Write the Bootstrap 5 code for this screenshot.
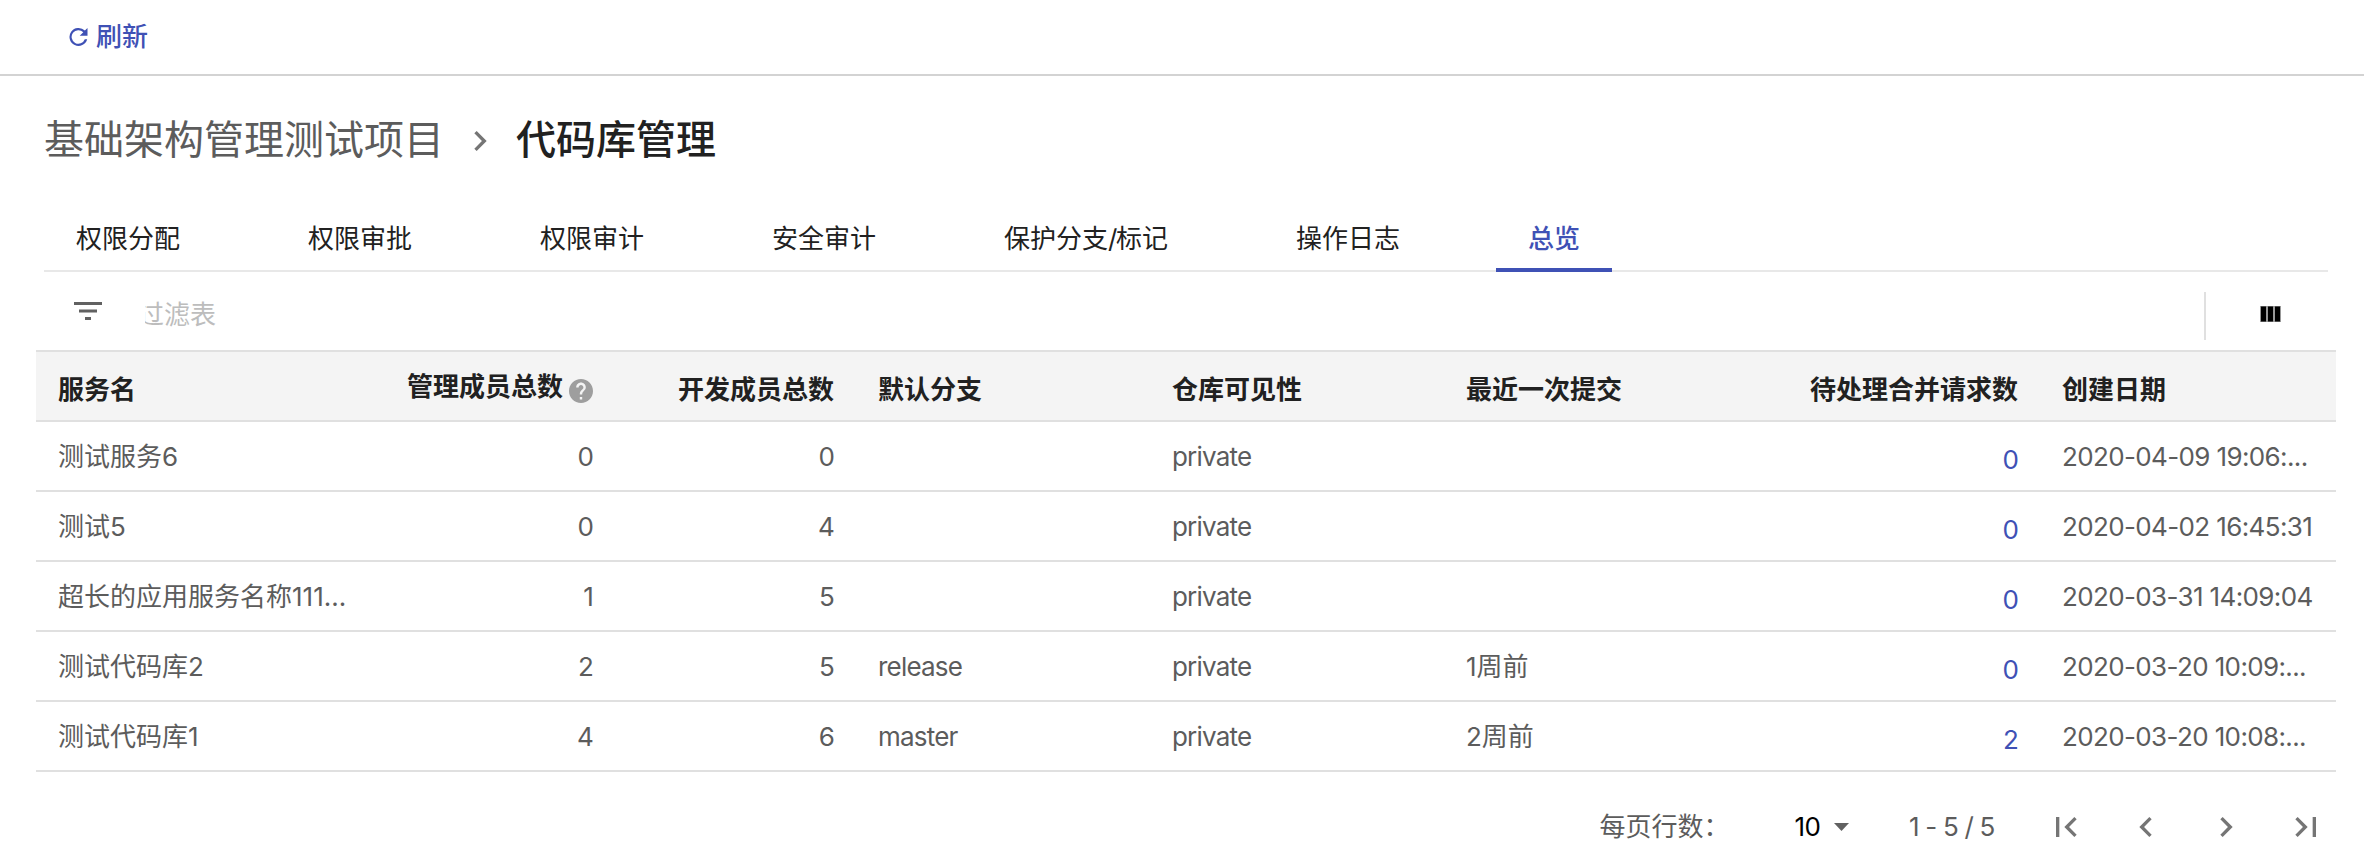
<!DOCTYPE html>
<html lang="zh-CN">
<head>
<meta charset="utf-8">
<title>代码库管理</title>
<link href="https://cdn.jsdelivr.net/npm/bootstrap@5.3.0/dist/css/bootstrap.min.css" rel="stylesheet">
<script src="https://cdn.jsdelivr.net/npm/bootstrap@5.3.0/dist/js/bootstrap.bundle.min.js" defer></script>
<style>
:root{--line:#e0e0e0;--brand:#3f51b5;--muted:#5c5c5c;--ink:#212121}
body{font-family:Inter,"Noto Sans CJK SC",sans-serif;font-size:26px;line-height:36px;color:var(--muted);background:#fff;overflow:hidden}
svg{display:block;flex:none}
.toolbar{height:76px;border-bottom:2px solid #d3d3d3;padding-left:66px}
.refresh{color:var(--brand);font-weight:500;gap:5px}
.crumbs{font-size:40px;line-height:56px;padding:36px 0 0 44px;height:136px}
.crumbs svg{margin:9px 16px 0}
.crumbs .here{color:var(--ink);font-weight:500}
.tabs{margin:0 36px 0 44px;height:60px;border-bottom:2px solid #e8e8e8;gap:64px}
.tabs .nav-link{padding:9px 32px 0;height:60px;color:var(--ink);border-bottom:4px solid transparent}
.tabs .nav-link.active{color:var(--brand);font-weight:500;border-color:var(--brand)}
.slash{letter-spacing:-1.5px}
.filter{margin:0 28px 0 36px;height:78px}
.filter-icon{margin:30px 0 0 38px}
.filter-text{margin:25px 0 0 43px;width:300px;color:#bdbdbd;overflow:hidden;text-indent:-7px}
.rule{width:2px;height:48px;margin-top:20px;background:var(--line)}
.columns-icon{margin:34px 55px 0 54px}
.grid{width:2300px;margin-left:36px;table-layout:fixed;border-collapse:separate;border-spacing:0}
.grid th,.grid td{height:70px;padding:2px 22px 0;border-bottom:2px solid var(--line);vertical-align:middle;white-space:nowrap}
.grid th{height:72px;padding-top:8px;border-top:2px solid var(--line);background:#f4f4f4;color:var(--ink);font-weight:600}
.grid td.text-end,.latin{letter-spacing:-.8px}
.stamp{letter-spacing:-.63px}
.grid a{position:relative;top:3px;color:var(--brand);text-decoration:none}
.with-help{gap:6px;margin-top:-6px}
.with-help svg{margin-top:7px}
.pager{height:88px;padding:21px 34px 0 0}
.size{margin-left:65px;gap:14px;color:#000}
.range{margin-left:60px;width:98px}
.pager button{width:48px;height:48px;padding:4px;border:0;background:none;color:#757575}
.pages{margin-left:35px;gap:32px}
</style>
</head>
<body>
<header class="toolbar d-flex align-items-center">
  <a class="refresh d-flex align-items-center text-decoration-none" href="#">
    <svg width="25" height="24" viewBox="0 0 24 24" fill="currentColor"><path d="M18.400 5.600A9 9 0 1 0 20.700 14.300h-2.400A6.800 6.800 0 1 1 16.800 7.200L13.200 10.800H21V3z"/></svg>
    <span>刷新</span>
  </a>
</header>
<nav class="crumbs d-flex align-items-start">
  <span>基础架构管理测试项目</span>
  <svg width="40" height="40" viewBox="0 0 24 24" fill="#757575"><path d="M10 6L8.590 7.410 13.170 12l-4.580 4.590L10 18l6-6z"/></svg>
  <span class="here">代码库管理</span>
</nav>
<ul class="nav tabs flex-nowrap">
  <li><a class="nav-link" href="#">权限分配</a></li>
  <li><a class="nav-link" href="#">权限审批</a></li>
  <li><a class="nav-link" href="#">权限审计</a></li>
  <li><a class="nav-link" href="#">安全审计</a></li>
  <li><a class="nav-link" href="#">保护分支<span class="slash">/</span>标记</a></li>
  <li><a class="nav-link" href="#">操作日志</a></li>
  <li><a class="nav-link active" href="#">总览</a></li>
</ul>
<div class="filter d-flex align-items-start">
  <svg class="filter-icon" width="28" height="18" fill="#616161"><path d="M0 0h28v3H0zM5 7.500h18v3H5zM11 15h6v3h-6z"/></svg>
  <div class="filter-text">过滤表</div>
  <div class="rule ms-auto"></div>
  <svg class="columns-icon" width="21" height="16"><path fill="#999" d="M0 0h21v16H0z"/><path d="M1 .5h5v15H1zM8 .5h5v15H8zM15 .5h5v15h-5z"/></svg>
</div>
<table class="grid">
  <colgroup><col width="334"><col width="245"><col width="241"><col width="294"><col width="294"><col width="294"><col width="302"><col width="296"></colgroup>
  <thead>
    <tr>
      <th>服务名</th>
      <th><div class="with-help d-flex align-items-center justify-content-end"><span>管理成员总数</span>
        <svg width="24" height="24" viewBox="2 2 20 20" fill="#9e9e9e"><path d="M12 2C6.480 2 2 6.480 2 12s4.480 10 10 10 10-4.480 10-10S17.520 2 12 2zm1 17h-2v-2h2v2zm2.070-7.750l-.9.920C13.450 12.900 13 13.500 13 15h-2v-.5c0-1.100.450-2.100 1.170-2.830l1.240-1.260c.370-.360.590-.860.590-1.410 0-1.100-.9-2-2-2s-2 .9-2 2H8c0-2.210 1.790-4 4-4s4 1.790 4 4c0 .880-.360 1.680-.930 2.250z"/></svg></div></th>
      <th class="text-end">开发成员总数</th><th>默认分支</th><th>仓库可见性</th><th>最近一次提交</th><th class="text-end">待处理合并请求数</th><th>创建日期</th>
    </tr>
  </thead>
  <tbody>
    <tr><td>测试服务6</td><td class="text-end">0</td><td class="text-end">0</td><td></td><td class="latin">private</td><td></td><td class="text-end"><a href="#">0</a></td><td class="stamp">2020-04-09 19:06:...</td></tr>
    <tr><td>测试5</td><td class="text-end">0</td><td class="text-end">4</td><td></td><td class="latin">private</td><td></td><td class="text-end"><a href="#">0</a></td><td class="stamp">2020-04-02 16:45:31</td></tr>
    <tr><td>超长的应用服务名称111...</td><td class="text-end">1</td><td class="text-end">5</td><td></td><td class="latin">private</td><td></td><td class="text-end"><a href="#">0</a></td><td class="stamp">2020-03-31 14:09:04</td></tr>
    <tr><td>测试代码库2</td><td class="text-end">2</td><td class="text-end">5</td><td class="latin">release</td><td class="latin">private</td><td>1周前</td><td class="text-end"><a href="#">0</a></td><td class="stamp">2020-03-20 10:09:...</td></tr>
    <tr><td>测试代码库1</td><td class="text-end">4</td><td class="text-end">6</td><td class="latin">master</td><td class="latin">private</td><td>2周前</td><td class="text-end"><a href="#">2</a></td><td class="stamp">2020-03-20 10:08:...</td></tr>
  </tbody>
</table>
<footer class="pager d-flex align-items-center justify-content-end">
  <span>每页行数：</span>
  <div class="size d-flex align-items-center"><span class="latin">10</span><svg width="15" height="8" fill="#616161"><path d="M0 0h15L7.500 8z"/></svg></div>
  <span class="range latin text-nowrap">1 - 5 / 5</span>
  <div class="pages d-flex">
    <button><svg width="40" height="40" viewBox="0 0 24 24" fill="currentColor"><path d="M18.410 16.590L13.820 12l4.590-4.590L17 6l-6 6 6 6zM6 6h2v12H6z"/></svg></button>
    <button><svg width="40" height="40" viewBox="0 0 24 24" fill="currentColor"><path d="M15.410 7.410L14 6l-6 6 6 6 1.410-1.410L10.830 12z"/></svg></button>
    <button><svg width="40" height="40" viewBox="0 0 24 24" fill="currentColor"><path d="M10 6L8.590 7.410 13.170 12l-4.580 4.590L10 18l6-6z"/></svg></button>
    <button><svg width="40" height="40" viewBox="0 0 24 24" fill="currentColor"><path d="M5.590 7.410L10.180 12l-4.590 4.590L7 18l6-6-6-6zM16 6h2v12h-2z"/></svg></button>
  </div>
</footer>
</body>
</html>
